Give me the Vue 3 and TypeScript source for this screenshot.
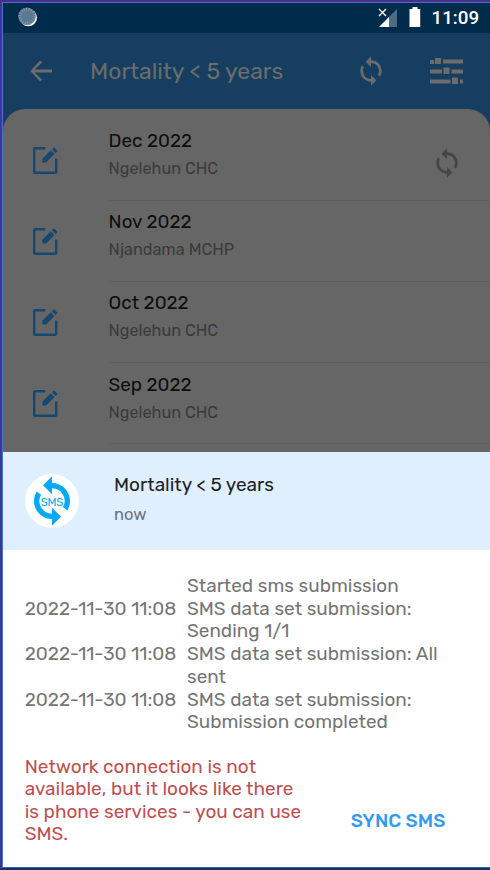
<script setup lang="ts">
interface Report {
  period: string
  unit: string
  pending?: boolean
}

interface LogEntry {
  date: string
  lines: string[]
}

const reports: Report[] = [
  { period: 'Dec 2022', unit: 'Ngelehun CHC', pending: true },
  { period: 'Nov 2022', unit: 'Njandama MCHP' },
  { period: 'Oct 2022', unit: 'Ngelehun CHC' },
  { period: 'Sep 2022', unit: 'Ngelehun CHC' },
]

const log: LogEntry[] = [
  { date: '', lines: ['Started sms submission'] },
  { date: '2022-11-30 11:08', lines: ['SMS data set submission:', 'Sending 1/1'] },
  { date: '2022-11-30 11:08', lines: ['SMS data set submission: All', 'sent'] },
  { date: '2022-11-30 11:08', lines: ['SMS data set submission:', 'Submission completed'] },
]

const warning = [
  'Network connection is not',
  'available, but it looks like there',
  'is phone services - you can use',
  'SMS.',
]

const syncPath =
  'M12 4V1L8 5l4 4V6c3.31 0 6 2.69 6 6 0 1.01-.25 1.97-.7 2.8l1.46 1.46C19.54 15.03 20 13.57 20 12c0-4.42-3.58-8-8-8zm0 14c-3.31 0-6-2.69-6-6 0-1.01.25-1.97.7-2.8L5.24 7.74C4.46 8.97 4 10.43 4 12c0 4.42 3.58 8 8 8v3l4-4-4-4v3z'
</script>

<template>
  <div class="screen">
    <header class="status">
      <svg class="dial" width="20" height="20" viewBox="0 0 20 20">
        <circle cx="10.3" cy="10.6" r="8.7" fill="#fff" />
        <circle cx="9" cy="9.2" r="8.8" fill="#5b7a92" />
        <circle cx="9" cy="9.2" r="7.3" fill="none" stroke="#8499aa" stroke-width="2.4" stroke-dasharray="1 1.55" />
      </svg>
      <div class="status-right">
        <svg width="20" height="20" viewBox="0 0 20 20">
          <path d="M19 1v18H1z" fill="#4d6b83" />
          <path d="M11 9v10H1z" fill="#fff" />
          <path d="M1 1l7 7M8 1L1 8" stroke="#002b4b" stroke-width="3" />
          <path d="M1 1l7 7M8 1L1 8" stroke="#fff" stroke-width="1.4" />
        </svg>
        <svg class="battery" width="12" height="20" viewBox="0 0 12 20">
          <path d="M3.5 0h5v2h2.7v18H.5V2h3z" fill="#fff" />
        </svg>
        <span class="clock">11:09</span>
      </div>
    </header>

    <nav class="appbar">
      <svg class="back" width="24" height="24" viewBox="0 0 24 24">
        <path d="M22 10.6H4.800l7.200-7.200-1.900-1.900L.3 12l9.800 10.500 1.900-1.900-7.200-7.200H22z" fill="#6c6c6c" />
      </svg>
      <h1>Mortality &lt; 5 years</h1>
      <svg class="sync" width="32" height="32" viewBox="0 0 24 24"><path :d="syncPath" fill="#6c6c6c" /></svg>
      <svg class="filter" width="34" height="26" viewBox="0 0 34 26">
        <path d="M0 2h4v4H0zM5 0h6v6H5zM13 1.500h20v4H13zM0 11.500h12v4H0zM13.500 9.500h6v6.500h-6zM21.500 11.500H33v4H21.500zM0 21.500h20.500v4H0zM22 19.500h6v6.500h-6zM30 21.500h3v4h-3z" fill="#6c6c6c" />
      </svg>
    </nav>

    <main class="list">
      <div v-for="r in reports" :key="r.period" class="row">
        <svg class="edit" width="25" height="28" viewBox="0 0 25 28">
          <path d="M12.300 1.300H2.200a1 1 0 0 0-1 1v22.500a1 1 0 0 0 1 1h20a1 1 0 0 0 1-1V11.500" fill="none" stroke="#154870" stroke-width="2.400" />
          <path d="M9.300 11.800v3.700H13L21.500 7l-3.700-3.700zM18.900 2.200l3.700 3.700 1.500-1.500a.8.8 0 0 0 0-1.100L21.500.7a.8.8 0 0 0-1.100 0z" fill="#154870" />
        </svg>
        <div class="entry">
          <div class="texts">
            <div class="period">{{ r.period }}</div>
            <div class="unit">{{ r.unit }}</div>
          </div>
          <svg v-if="r.pending" class="pending" width="32" height="32" viewBox="0 0 24 24">
            <path :d="syncPath" fill="#444" />
          </svg>
        </div>
      </div>
    </main>

    <section class="sheet">
      <div class="sheet-head">
        <svg class="badge" width="54" height="54" viewBox="0 0 54 54">
          <circle cx="27" cy="27" r="27" fill="#fff" />
          <g transform="scale(2.250)">
            <path :d="syncPath" fill="#03a9f4" />
            <path d="M12 5.600A6.400 6.400 0 0 1 17.500 15.200M12 18.400A6.400 6.400 0 0 1 6.500 8.800" fill="none" stroke="#03a9f4" stroke-width="1.500" />
          </g>
          <text x="27" y="31.500" text-anchor="middle" textLength="22.500">SMS</text>
        </svg>
        <div>
          <div class="sheet-title">Mortality &lt; 5 years</div>
          <div class="sheet-time">now</div>
        </div>
      </div>
      <div class="log">
        <div v-for="(e, i) in log" :key="i" class="log-row">
          <div class="date">{{ e.date }}</div>
          <div><div v-for="l in e.lines" :key="l" class="line">{{ l }}</div></div>
        </div>
      </div>
      <div class="foot">
        <div class="warning"><div v-for="w in warning" :key="w">{{ w }}</div></div>
        <button type="button">SYNC SMS</button>
      </div>
    </section>
  </div>
</template>

<style>
body {
  margin: 0;
  overflow: hidden;
}
</style>

<style scoped>
.screen {
  box-sizing: border-box;
  width: 490px;
  height: 870px;
  display: flex;
  flex-direction: column;
  border-top: 2px solid #45308a;
  border-left: 2px solid #3b3a90;
  border-bottom: 2px solid #1d2b66;
  box-shadow: inset 1px 1px #4b72cf, inset 0 -1px #3560ad;
  padding: 1px 0 1px 1px;
  background: #153e61;
  font-family: Rubik, Roboto, sans-serif;
  white-space: nowrap;
  overflow: hidden;
}
.status {
  height: 30px;
  flex: none;
  display: flex;
  justify-content: space-between;
  background: #002b4b;
  padding: 0 11px 0 15px;
}
.dial {
  margin-top: 4px;
}
.status-right {
  display: flex;
  align-items: flex-start;
}
.status-right svg {
  margin-top: 5px;
}
.status-right .battery {
  margin: 4px 0 0 11px;
}
.clock {
  margin-left: 10.5px;
  width: 47.5px;
  font: 500 18.8px/31px Roboto, sans-serif;
  color: #fff;
}
.appbar {
  height: 76px;
  flex: none;
  display: flex;
  align-items: center;
}
.back {
  margin-left: 27px;
}
h1 {
  margin: 1px 0 0 36px;
  width: 265px;
  font-size: 22.95px;
  font-weight: 400;
  line-height: 31px;
  color: #6c6c6c;
}
.filter {
  margin-left: 43px;
}
.list {
  box-sizing: border-box;
  height: 343px;
  flex: none;
  padding-top: 10.5px;
  border-radius: 22px 22px 0 0;
  background: #666;
  overflow: hidden;
}
.row {
  display: flex;
  height: 81.2px;
}
.edit {
  flex: none;
  margin: 27.4px 0 0 29.7px;
}
.entry {
  box-sizing: border-box;
  margin-left: 50.9px;
  flex: 1;
  display: flex;
  justify-content: space-between;
  border-bottom: 1px solid #5e5e5e;
  padding: 9.6px 27px 0 0;
}
.period {
  font-size: 18.8px;
  line-height: 24px;
  color: #0e0e0e;
}
.unit {
  margin-top: 5px;
  font-size: 16.2px;
  line-height: 22px;
  color: #3b3b3b;
}
.pending {
  margin-top: 18px;
}
.sheet {
  flex: 1;
  background: #fff;
}
.sheet-head {
  height: 98px;
  display: flex;
  background: #e0effd;
}
.badge {
  margin: 22px 0 0 21.7px;
}
.badge text {
  font-size: 11.3px;
  fill: #03a9f4;
}
.sheet-head > div {
  margin-left: 35.3px;
}
.sheet-title {
  margin-top: 21px;
  font-size: 19px;
  line-height: 24px;
  color: #1e2327;
}
.sheet-time {
  margin-top: 7px;
  font-size: 16.5px;
  line-height: 22px;
  color: #6c757c;
}
.log {
  padding: 25.1px 0 0 21.7px;
  font-size: 18.97px;
  line-height: 22.68px;
  color: #757575;
}
.log-row {
  display: grid;
  grid-template-columns: 162.3px 1fr;
}
.foot {
  display: flex;
  justify-content: space-between;
  padding: 22.1px 44.7px 0 21.7px;
}
.warning {
  font-size: 18.97px;
  line-height: 22.4px;
  color: #bd5052;
}
button {
  margin: 53px 0 0;
  padding: 0;
  align-self: flex-start;
  border: 0;
  background: none;
  font-family: inherit;
  font-size: 18.97px;
  font-weight: 500;
  line-height: 24px;
  color: #339bef;
}
</style>
